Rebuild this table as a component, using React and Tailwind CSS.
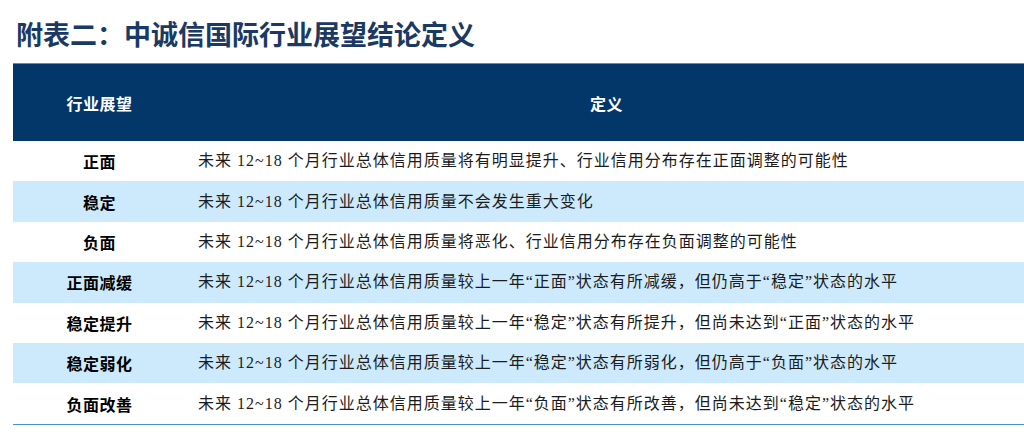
import React from 'react';

const rows = [
    { label: '正面', text: ['未来 ', '12~18', ' 个月行业总体信用质量将有明显提升、行业信用分布存在正面调整的可能性'] },
    { label: '稳定', text: ['未来 ', '12~18', ' 个月行业总体信用质量不会发生重大变化'] },
    { label: '负面', text: ['未来 ', '12~18', ' 个月行业总体信用质量将恶化、行业信用分布存在负面调整的可能性'] },
    { label: '正面减缓', text: ['未来 ', '12~18', ' 个月行业总体信用质量较上一年“正面”状态有所减缓，但仍高于“稳定”状态的水平'] },
    { label: '稳定提升', text: ['未来 ', '12~18', ' 个月行业总体信用质量较上一年“稳定”状态有所提升，但尚未达到“正面”状态的水平'] },
    { label: '稳定弱化', text: ['未来 ', '12~18', ' 个月行业总体信用质量较上一年“稳定”状态有所弱化，但仍高于“负面”状态的水平'] },
    { label: '负面改善', text: ['未来 ', '12~18', ' 个月行业总体信用质量较上一年“负面”状态有所改善，但尚未达到“稳定”状态的水平'] },
];

export default function App() {
    return (
        <div className="w-[1024px] h-[438px] overflow-hidden bg-white font-['Noto_Sans_CJK_SC',sans-serif]">
            <h1 className="pl-[16px] pt-[17px] h-[63px] text-[27px] leading-[34px] font-bold text-[#1b3a63]">
                附表二：中诚信国际行业展望结论定义
            </h1>

            <div className="ml-[13px] w-[1014px] border-t border-[#4d8fd6] border-b">
                {/* header */}
                <div className="flex h-[77px] items-center bg-[#033769] text-white font-bold text-[16px]">
                    <div className="w-[173px] text-center tracking-[0.5px]">行业展望</div>
                    <div className="flex-1 text-center tracking-[0.5px]">定义</div>
                </div>

                {/* body */}
                {rows.map((row, i) => (
                    <div
                        key={row.label}
                        className={
                            'flex h-[40.4px] items-center ' +
                            (i % 2 === 1 ? 'bg-[#cdeafc]' : 'bg-white')
                        }
                    >
                        <div className="w-[173px] text-center text-[16px] font-bold text-black tracking-[0.5px]">
                            {row.label}
                        </div>
                        <div className="flex-1 pl-[12px] text-[16px] tracking-[1px] text-[#1c1c1c] font-['Liberation_Serif','Noto_Sans_CJK_SC',serif] whitespace-nowrap">
                            {row.text.join('')}
                        </div>
                    </div>
                ))}
            </div>
        </div>
    );
}
